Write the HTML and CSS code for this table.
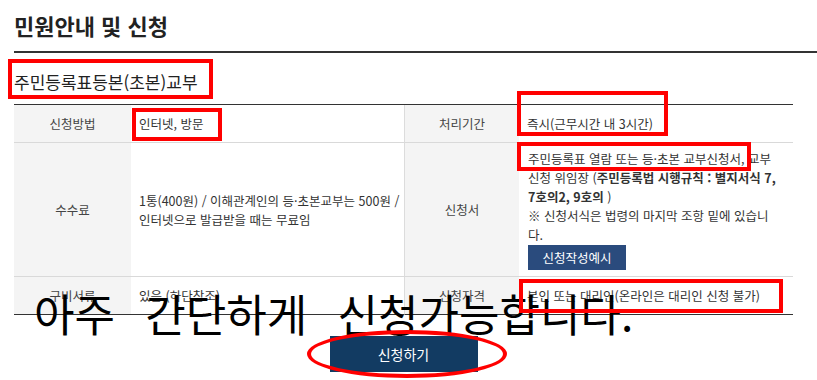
FILE: index.html
```html
<!DOCTYPE html>
<html lang="ko">
<head>
<meta charset="utf-8">
<title>민원안내 및 신청</title>
<link rel="stylesheet" href="styles.css">
</head>
<body>
<div class="page">
  <div class="title-bar">
    <h1 class="title">민원안내 및 신청</h1>
  </div>
  <div class="content">
    <h2 class="subtitle">주민등록표등본(초본)교부</h2>
    <div class="info-grid">
      <div class="th">신청방법</div>
      <div class="td">인터넷, 방문</div>
      <div class="th sep">처리기간</div>
      <div class="td">즉시(근무시간 내 3시간)</div>

      <div class="th">수수료</div>
      <div class="td"><p class="para">1통(400원) / 이해관계인의 등·초본교부는 500원 /<br>인터넷으로 발급받을 때는 무료임</p></div>
      <div class="th sep">신청서</div>
      <div class="td block">
        <p class="para">주민등록표 열람 또는 등·초본 교부신청서, 교부<br>신청 위임장 (<strong>주민등록법 시행규칙 : 별지서식 7,<br>7호의2, 9호의</strong> )</p>
        <p class="para">※ 신청서식은 법령의 마지막 조항 밑에 있습니<br>다.</p>
        <a class="btn-small" href="#">신청작성예시</a>
      </div>

      <div class="th last">구비서류</div>
      <div class="td last">있음 (하단참조)</div>
      <div class="th sep last">신청자격</div>
      <div class="td last">본인 또는 대리인(온라인은 대리인 신청 불가)</div>
    </div>
    <div class="actions">
      <button class="btn-apply" type="button">신청하기</button>
    </div>
  </div>

  <p class="caption">아주 간단하게 신청가능합니다.</p>

  <span class="mark mark-subtitle"></span>
  <span class="mark mark-method"></span>
  <span class="mark mark-period"></span>
  <span class="mark mark-form"></span>
  <span class="mark mark-qual"></span>
  <span class="mark-ellipse"></span>
</div>
</body>
</html>
```

FILE: styles.css
```css
* { box-sizing: border-box; }

html, body {
  margin: 0;
  padding: 0;
  background: #fff;
}

body {
  font-family: "Noto Sans CJK KR", "Noto Sans", sans-serif;
  color: #333;
  overflow: hidden;
}

.page {
  position: relative;
  width: 817px;
  height: 380px;
}

.title-bar {
  margin-left: 14px;
  padding-bottom: 10px;
  border-bottom: 2px solid #333;
}

.title {
  margin: 0;
  padding-top: 9px;
  font-size: 22px;
  line-height: 32px;
  font-weight: 700;
  letter-spacing: 0;
  color: #222;
}

.content {
  margin-left: 14px;
  width: 779px;
}

.subtitle {
  margin: 17px 0 10px;
  font-size: 17px;
  line-height: 24px;
  font-weight: 400;
  letter-spacing: 0;
  color: #222;
}

.info-grid {
  display: grid;
  grid-template-columns: 117px 273px 115px 274px;
  grid-auto-rows: minmax(38px, auto);
  border-top: 1px solid #333;
  font-size: 12.5px;
  line-height: 19px;
}

.th,
.td {
  display: flex;
  align-items: center;
  border-bottom: 1px solid #d9d9d9;
  padding: 6px 2px 6px 8px;
}

.th {
  justify-content: center;
  padding-right: 8px;
  background: #f4f4f4;
  color: #444;
}

.th.sep {
  border-left: 1px solid #dcdcdc;
}

.td {
  color: #333;
  background: #fff;
}

.th.last,
.td.last {
  border-bottom-color: #333;
}

.td.block {
  display: block;
  padding-left: 9px;
}

.para {
  margin: 0;
  white-space: nowrap;
}

.para strong {
  font-weight: 700;
  color: #333;
}

.btn-small {
  display: inline-block;
  margin-top: 1px;
  width: 98px;
  height: 25px;
  line-height: 25px;
  text-align: center;
  background: #2a4b7d;
  color: #fff;
  text-decoration: none;
  font-size: 12.5px;
}

.actions {
  display: flex;
  justify-content: center;
  padding-top: 21px;
}

.btn-apply {
  width: 148px;
  height: 36px;
  border: 0;
  background: #123b62;
  color: #fff;
  font-family: inherit;
  font-size: 14px;
  cursor: pointer;
}

.caption {
  position: absolute;
  left: 34px;
  top: 288px;
  margin: 0;
  font-size: 44px;
  line-height: 50px;
  font-weight: 400;
  color: #000;
  word-spacing: 18px;
  white-space: nowrap;
}

.mark {
  position: absolute;
  border: 4px solid #f00;
}

.mark-subtitle { left: 8px; top: 59px; width: 205px; height: 40px; }
.mark-method { left: 132px; top: 108px; width: 90px; height: 33px; }
.mark-period { left: 517px; top: 91px; width: 151px; height: 45px; }
.mark-form { left: 517px; top: 142px; width: 234px; height: 29px; }
.mark-qual { left: 519px; top: 279px; width: 264px; height: 34px; }

.mark-ellipse {
  position: absolute;
  left: 307px;
  top: 330px;
  width: 200px;
  height: 48px;
  border: 4px solid #f00;
  border-radius: 50%;
}
```
